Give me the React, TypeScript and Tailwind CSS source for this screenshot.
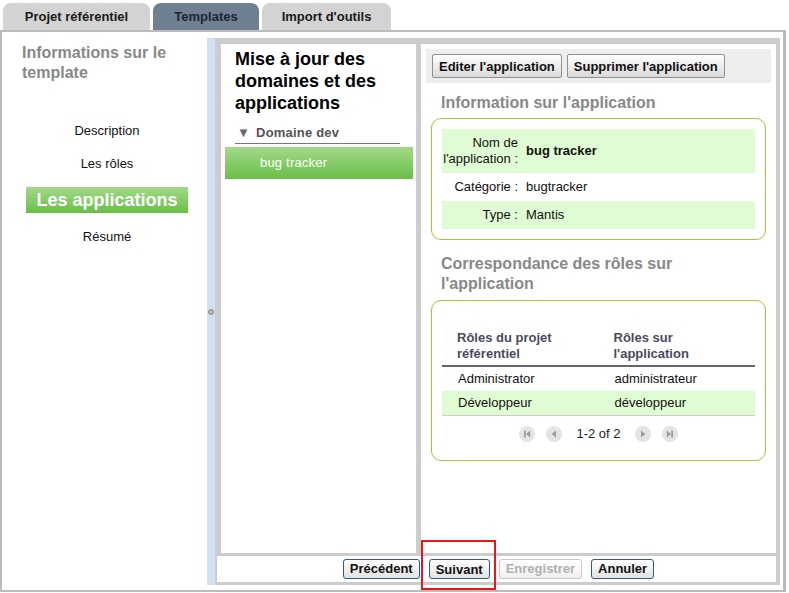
import React from 'react';

const tabs = [
  { label: 'Projet référentiel', w: 'w-[147px]', active: false },
  { label: 'Templates', w: 'w-[106px]', active: true },
  { label: "Import d'outils", w: 'w-[129px]', active: false },
];

const toolBtn =
  'h-[24px] px-[6px] border border-[#8f8f8f] rounded-[2px] bg-linear-to-b from-white to-[#dadada] text-[13px] font-bold text-[#111] leading-none';

const navBtn =
  'h-[20px] px-[6px] border border-[#2c5a8c] rounded-[3px] bg-linear-to-b from-white to-[#e2e2e2] text-[13px] font-bold text-[#111] leading-none';

function PagerIcon({ kind }: { kind: 'first' | 'prev' | 'next' | 'last' }) {
  return (
    <svg width="16" height="16" viewBox="0 0 16 16">
      <circle cx="8" cy="8" r="8" fill="#e4e4e4" />
      {kind === 'first' && (
        <>
          <rect x="5" y="4.5" width="1.8" height="7" fill="#9c9c9c" />
          <polygon points="11.2,4.5 11.2,11.5 7,8" fill="#9c9c9c" />
        </>
      )}
      {kind === 'prev' && <polygon points="10,4.5 10,11.5 5.6,8" fill="#9c9c9c" />}
      {kind === 'next' && <polygon points="6,4.5 6,11.5 10.4,8" fill="#9c9c9c" />}
      {kind === 'last' && (
        <>
          <polygon points="4.8,4.5 4.8,11.5 9,8" fill="#9c9c9c" />
          <rect x="9.2" y="4.5" width="1.8" height="7" fill="#9c9c9c" />
        </>
      )}
    </svg>
  );
}

function LeftNav() {
  return (
    <div className="w-[205px] shrink-0 pt-[11px]">
      <div className="pl-[20px] text-[16px] font-bold leading-[20px] text-[#888]">
        Informations sur le
        <br />
        template
      </div>
      <div className="flex flex-col items-center pl-[5px] text-[13px] leading-[16px] text-[#111]">
        <div className="mt-[40px]">Description</div>
        <div className="mt-[17px]">Les rôles</div>
        <div className="mt-[15px] flex h-[26px] w-[162px] items-center justify-center bg-linear-to-b from-[#a2d989] to-[#68bf45] text-[18px] font-bold text-white">
          Les applications
        </div>
        <div className="mt-[16px]">Résumé</div>
      </div>
    </div>
  );
}

function DomainPanel() {
  return (
    <div className="w-[195px] shrink-0 bg-white">
      <div className="pl-[14px] pt-[4px] text-[18px] font-bold leading-[22px] text-black">
        Mise à jour des
        <br />
        domaines et des
        <br />
        applications
      </div>
      <div className="ml-[14px] mr-[16px] mt-[11px] flex items-center border-b border-[#777] pb-[2px] pl-[2px] text-[13px] font-bold leading-[16px] tracking-[0.2px] text-[#555]">
        <span className="mr-[6px] text-[13px] leading-[16px] text-[#667]">▼</span>
        Domaine dev
      </div>
      <div className="ml-[4px] mr-[3px] mt-[3px] flex h-[32px] items-center bg-linear-to-b from-[#a2d989] to-[#6abf47] pl-[35px] text-[13px] tracking-[0.2px] text-white">
        bug tracker
      </div>
    </div>
  );
}

function AppPanel() {
  const info = [
    { label: ['Nom de', "l'application :"], value: 'bug tracker', bold: true, green: true, h: 'h-[44px]' },
    { label: ['Catégorie :'], value: 'bugtracker', bold: false, green: false, h: 'h-[28px]' },
    { label: ['Type :'], value: 'Mantis', bold: false, green: true, h: 'h-[28px]' },
  ];
  return (
    <div className="flex-1 border-l-[5px] border-[#ccc] bg-white">
      <div className="mx-[5px] mt-[5px] flex h-[34px] items-center gap-[5px] bg-[#eee] pl-[6px]">
        <button className={toolBtn}>Editer l'application</button>
        <button className={toolBtn}>Supprimer l'application</button>
      </div>

      <div className="mt-[10px] pl-[20px] text-[16px] font-bold leading-[20px] text-[#888]">
        Information sur l'application
      </div>
      <div className="mx-[10px] mt-[5px] rounded-[10px] border border-[#9acd32] p-[10px]">
        {info.map((r) => (
          <div key={r.value} className={`flex items-center text-[13px] leading-[16px] text-[#111] ${r.h} ${r.green ? 'bg-[#e0fcd4]' : ''}`}>
            <div className="w-[82px] pr-[6px] text-right">
              {r.label.map((l) => (
                <div key={l}>{l}</div>
              ))}
            </div>
            <div className={`pl-[2px] ${r.bold ? 'font-bold' : ''}`}>{r.value}</div>
          </div>
        ))}
      </div>

      <div className="mt-[14px] pl-[20px] text-[16px] font-bold leading-[20px] text-[#888]">
        Correspondance des rôles sur
        <br />
        l'application
      </div>
      <div className="mx-[10px] mt-[6px] rounded-[10px] border border-[#9acd32] p-[10px]">
        <div className="mt-[19px] flex border-b-2 border-[#666] pb-[3px] text-[13px] font-bold leading-[16px] text-[#4b4b5b]">
          <div className="w-1/2 pl-[15px]">
            Rôles du projet
            <br />
            référentiel
          </div>
          <div className="w-1/2 pl-[15px]">
            Rôles sur
            <br />
            l'application
          </div>
        </div>
        <div className="flex h-[24px] items-center text-[13px] text-[#111]">
          <div className="w-1/2 pl-[16px]">Administrator</div>
          <div className="w-1/2 pl-[16px]">administrateur</div>
        </div>
        <div className="flex h-[25px] items-center border-b border-[#ccc] bg-[#e0fcd4] text-[13px] text-[#111]">
          <div className="w-1/2 pl-[16px]">Développeur</div>
          <div className="w-1/2 pl-[16px]">développeur</div>
        </div>
        <div className="mb-[7px] mt-[9px] flex h-[18px] items-center justify-center text-[13px] text-[#222]">
          <PagerIcon kind="first" />
          <span className="w-[11px]" />
          <PagerIcon kind="prev" />
          <span className="mx-[14px]">1-2 of 2</span>
          <PagerIcon kind="next" />
          <span className="w-[11px]" />
          <PagerIcon kind="last" />
        </div>
      </div>
    </div>
  );
}

export default function App() {
  return (
    <div className="h-[593px] w-[789px] overflow-hidden bg-white font-['Liberation_Sans',Arial,sans-serif]">
      <div className="flex h-[30px] items-end gap-[3px] pl-[3px]">
        {tabs.map((t) => (
          <div
            key={t.label}
            className={`flex h-[27px] items-center justify-center rounded-t-[8px] text-[13px] font-bold ${t.w} ${
              t.active ? 'bg-[#6e8091] text-[#1b2632]' : 'bg-[#d3d3d3] text-[#1a1a1a]'
            }`}
          >
            {t.label}
          </div>
        ))}
      </div>

      <div className="flex h-[562px] w-[786px] border-b-2 border-l-2 border-r-[3px] border-t-2 border-[#bbb]">
        <LeftNav />
        <div className="flex flex-1 pb-[5px] pr-[3px] pt-[6px]">
          <div className="flex w-[8px] shrink-0 items-center justify-center bg-[#cfe2f4]">
            <span className="h-[6px] w-[6px] rounded-full border border-[#888] bg-[#bbb]" />
          </div>
          <div className="flex flex-1 flex-col">
            <div className="flex flex-1 border-b-[3px] border-l-[6px] border-r-[4px] border-t-[6px] border-[#ccc]">
              <DomainPanel />
              <AppPanel />
            </div>
            <div className="flex h-[29px] items-center justify-center gap-[9px] border-b-[3px] border-l-2 border-r-[4px] border-[#ccc] bg-white pb-[1px] pl-[4px]">
              <button className={navBtn}>Précédent</button>
              <div className="relative">
                <button className={navBtn}>Suivant</button>
                <span className="absolute -bottom-[9px] -left-[8px] -right-[6px] -top-[17px] border-2 border-[#e8161b]" />
              </div>
              <button className="h-[20px] rounded-[3px] border border-[#c8c8c8] bg-linear-to-b from-white to-[#f0f0f0] px-[6px] text-[13px] font-bold leading-none text-[#b0b0b0]">
                Enregistrer
              </button>
              <button className={navBtn}>Annuler</button>
            </div>
          </div>
        </div>
      </div>
    </div>
  );
}
